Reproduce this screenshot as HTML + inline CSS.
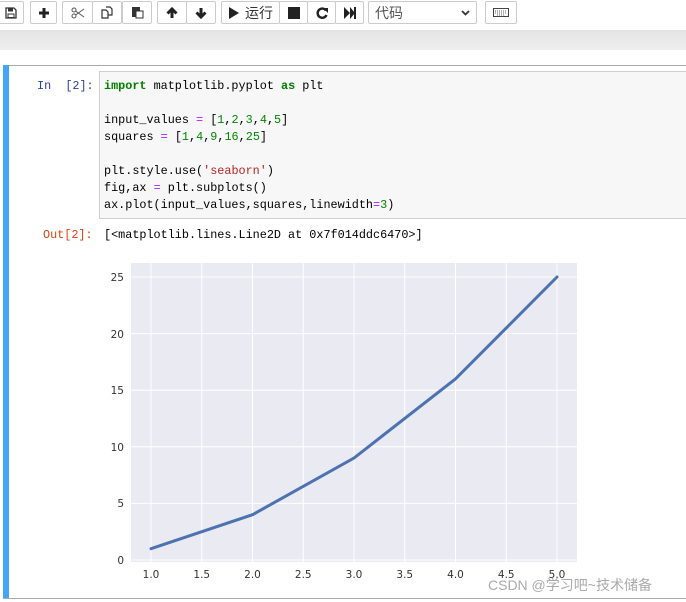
<!DOCTYPE html>
<html><head><meta charset="utf-8"><style>
body{margin:0;width:686px;height:602px;background:#fff;position:relative;overflow:hidden;font-family:"Liberation Sans","Noto Sans CJK SC",sans-serif}
.b{position:absolute;top:1px;height:23px;border:1px solid #ccc;border-radius:2px;background:#fff;box-sizing:border-box;display:flex;align-items:center;justify-content:center;font-size:13px;color:#333}
.mono{font-family:"Liberation Mono","Noto Sans CJK SC",monospace;font-size:11.8px}
.code{position:absolute;left:104px;top:78px;line-height:17px;white-space:pre;color:#000}
.k{color:#008000;font-weight:bold}.o{color:#aa22ff}.n{color:#080}.s{color:#ba2121}
</style></head><body>
<div class="b" style="left:-2px;width:26px"><svg width="12" height="12" viewBox="0 0 12 12"><path d="M1 1H9L11 3V11H1Z" fill="none" stroke="#333" stroke-width="1.3"/><rect x="3" y="1.5" width="5" height="3" fill="#333"/><rect x="3" y="7" width="6" height="3.5" fill="none" stroke="#333"/></svg></div>
<div class="b" style="left:30px;width:27px"><svg width="12" height="12"><path d="M6 1V11M1 6H11" stroke="#222" stroke-width="3"/></svg></div>
<div class="b" style="left:62px;width:31px"><svg width="14" height="12" viewBox="0 0 14 12"><circle cx="3" cy="3" r="2" fill="none" stroke="#555"/><circle cx="3" cy="9" r="2" fill="none" stroke="#555"/><path d="M4.5 4L13 10M4.5 8L13 2" stroke="#555"/></svg></div>
<div class="b" style="left:92px;width:30px"><svg width="13" height="13"><path d="M1 4H5L7 6V12H1Z M5 1H9L11 3V9H7" fill="#fff" stroke="#333" stroke-width="1.2"/></svg></div>
<div class="b" style="left:122px;width:30px"><svg width="13" height="13"><rect x="1" y="1" width="8" height="10" fill="#333"/><rect x="5" y="5" width="7" height="7" fill="#fff" stroke="#333"/></svg></div>
<div class="b" style="left:157px;width:30px"><svg width="12" height="12"><path d="M6 11V2M1.5 6.5L6 2L10.5 6.5" fill="none" stroke="#222" stroke-width="3"/></svg></div>
<div class="b" style="left:186px;width:30px"><svg width="12" height="12"><path d="M6 1V10M1.5 5.5L6 10L10.5 5.5" fill="none" stroke="#222" stroke-width="3"/></svg></div>
<div class="b" style="left:221px;width:59px;font-size:14px"><svg width="12" height="12" style="margin-right:5px"><path d="M1 0L11 6L1 12Z" fill="#222"/></svg>运行</div>
<div class="b" style="left:279px;width:29px"><svg width="12" height="12"><rect width="12" height="12" fill="#222"/></svg></div>
<div class="b" style="left:307px;width:29px"><svg width="12" height="12"><path d="M10 3.5A4.6 4.6 0 1 0 10.5 8" fill="none" stroke="#222" stroke-width="2.4"/><path d="M7 1L12 1L12 6Z" fill="#222"/></svg></div>
<div class="b" style="left:335px;width:29px"><svg width="12" height="12"><path d="M0 0L6 6L0 12ZM6 0L11 6L6 12Z M10 0H12V12H10Z" fill="#222"/></svg></div>
<div class="b" style="left:368px;width:109px;justify-content:space-between;padding:0 6px;font-size:14px;color:#555">代码<svg width="9" height="6"><path d="M1 1L4.5 4.5L8 1" fill="none" stroke="#333" stroke-width="1.8"/></svg></div>
<div class="b" style="left:485px;width:32px"><svg width="16" height="9"><rect x=".5" y=".5" width="15" height="8" fill="#fff" stroke="#444"/><path d="M2 3H14M2 5H14M4 7H12" stroke="#666" stroke-dasharray="1 1"/></svg></div>
<div style="position:absolute;left:0;top:30px;width:686px;height:20px;background:linear-gradient(#e4e4e4,#eee)"></div>
<div style="position:absolute;left:3px;top:65px;width:683px;height:532px;border-top:1px solid #aaa;border-bottom:1px solid #aaa"></div>
<div style="position:absolute;left:3px;top:65px;width:6px;height:533px;background:#42a5f5"></div>
<div class="mono" style="position:absolute;left:37px;top:79px;color:#303f9f">In&nbsp; [2]:</div>
<div style="position:absolute;left:99px;top:71px;width:590px;height:148px;background:#f7f7f7;border:1px solid #cfcfcf;box-sizing:border-box"></div>
<div class="code mono"><span class="k">import</span> matplotlib.pyplot <span class="k">as</span> plt

input_values <span class="o">=</span> [<span class="n">1</span>,<span class="n">2</span>,<span class="n">3</span>,<span class="n">4</span>,<span class="n">5</span>]
squares <span class="o">=</span> [<span class="n">1</span>,<span class="n">4</span>,<span class="n">9</span>,<span class="n">16</span>,<span class="n">25</span>]

plt.style.use(<span class="s">'seaborn'</span>)
fig,ax <span class="o">=</span> plt.subplots()
ax.plot(input_values,squares,linewidth<span class="o">=</span><span class="n">3</span>)</div>
<div class="mono" style="position:absolute;left:43px;top:228px;color:#d84315">Out[2]:</div>
<div class="mono" style="position:absolute;left:104px;top:228px">[&lt;matplotlib.lines.Line2D at 0x7f014ddc6470&gt;]</div>
<svg style="position:absolute;left:0;top:0" width="686" height="602">
<rect x="131" y="263" width="446" height="299" fill="#eaeaf2"/>
<g stroke="#fff" stroke-width="1">
<path d="M151 263V562M201.75 263V562M252.5 263V562M303.25 263V562M354 263V562M404.75 263V562M455.5 263V562M506.25 263V562M557 263V562"/>
<path d="M131 560H577M131 503.4H577M131 446.8H577M131 390.2H577M131 333.6H577M131 277H577"/>
</g>
<polyline points="151,548.7 252.5,514.7 354,458 455.5,378.9 557,277" fill="none" stroke="#4c72b0" stroke-width="3" stroke-linecap="round"/>
<g font-family="DejaVu Sans,sans-serif" font-size="10.5" fill="#333" text-anchor="end">
<text x="124" y="564">0</text><text x="124" y="507">5</text><text x="124" y="451">10</text><text x="124" y="394">15</text><text x="124" y="338">20</text><text x="124" y="281">25</text>
</g>
<g font-family="DejaVu Sans,sans-serif" font-size="10.5" fill="#333" text-anchor="middle">
<text x="151" y="578">1.0</text><text x="201.75" y="578">1.5</text><text x="252.5" y="578">2.0</text><text x="303.25" y="578">2.5</text><text x="354" y="578">3.0</text><text x="404.75" y="578">3.5</text><text x="455.5" y="578">4.0</text><text x="506.25" y="578">4.5</text><text x="557" y="578">5.0</text>
</g>
<text x="488" y="590" font-family="Liberation Sans,Noto Sans CJK SC,sans-serif" font-size="14" fill="#aaa">CSDN @学习吧~技术储备</text>
</svg>
</body></html>
